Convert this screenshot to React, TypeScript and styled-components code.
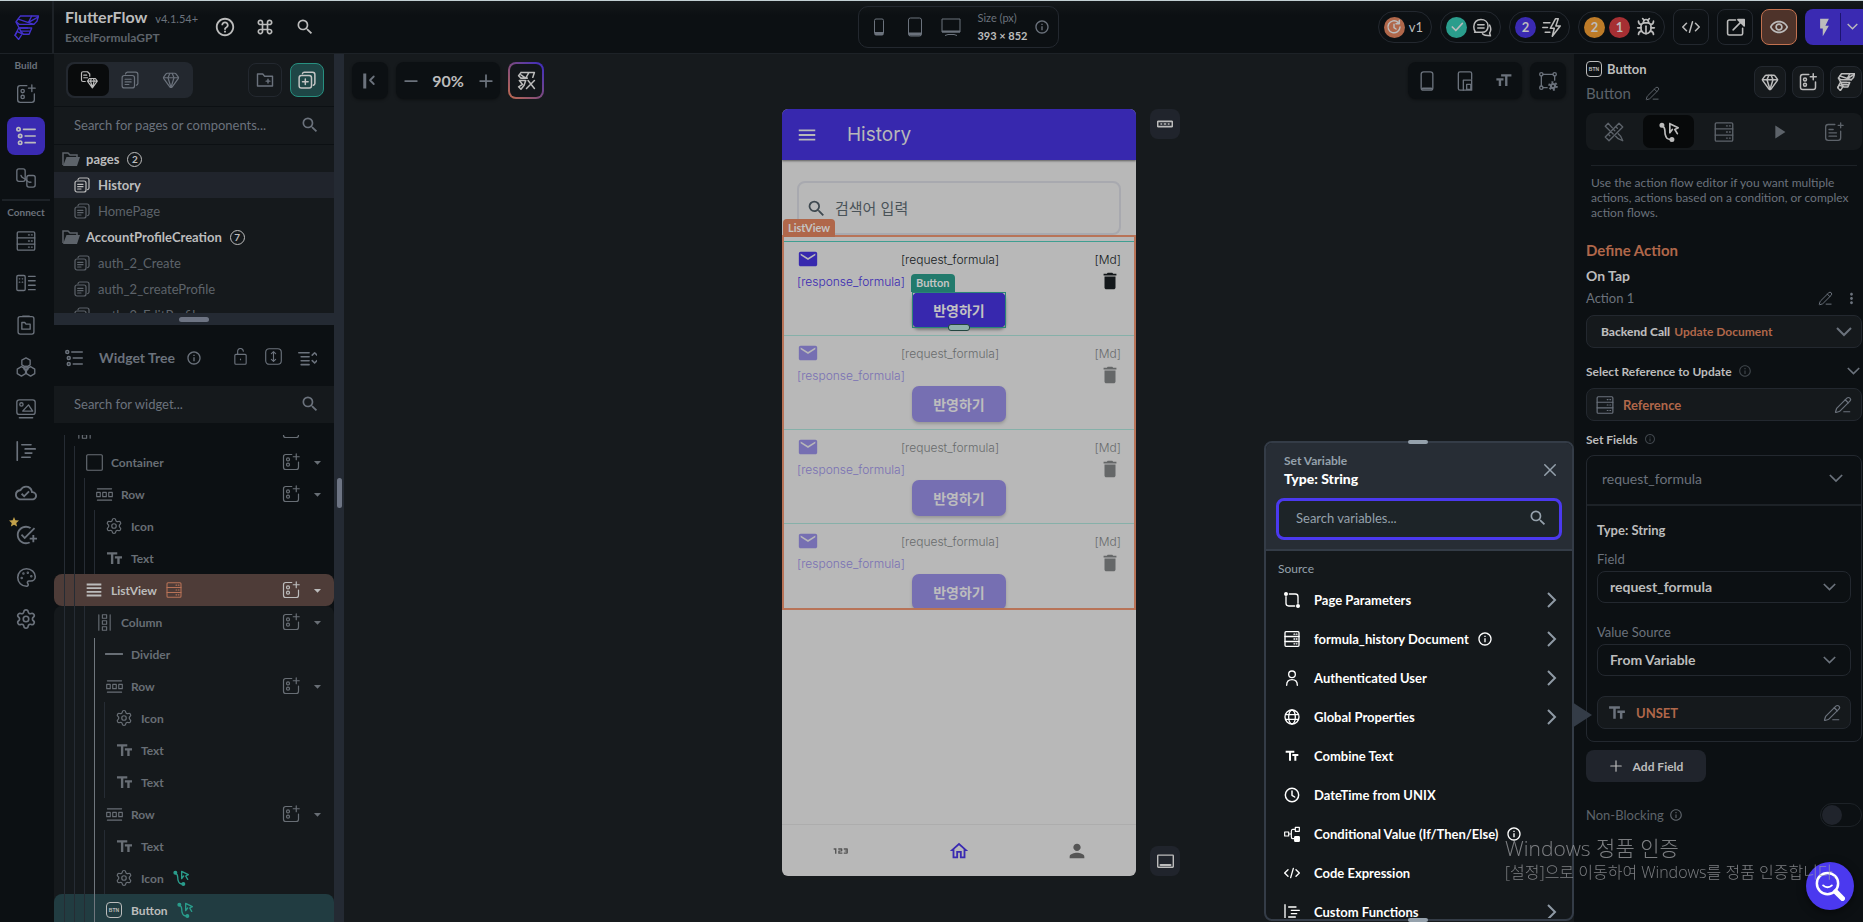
import React, { ReactNode, useState } from 'react';
import styled, { createGlobalStyle, css } from 'styled-components';
import { Bug, Gem, Palette, PencilLine, Settings } from 'lucide-react';
import {
  Md123,
  MdAddTask,
  MdArrowDropDown,
  MdDelete,
  MdEmail,
  MdFlashOn,
  MdFormatSize,
  MdHelpOutline,
  MdInfoOutline,
  MdKeyboardCommandKey,
  MdMenu,
  MdMoreVert,
  MdOutlineCloudDone,
  MdOutlineHome,
  MdOutlineRemoveRedEye,
  MdPerson,
  MdPlayArrow,
  MdSearch,
  MdStar,
  MdTextFields,
  MdViewHeadline,
} from 'react-icons/md';

const c = {
  bg: '#0c1013',
  panel: '#15191c',
  line: '#1d2227',
  box: '#23282f',
  text: '#bcbcbc',
  muted: '#6b727c',
  dim: '#5d636a',
  orange: '#b0674a',
  purple: '#3a2ab2',
  teal: '#2a9d8c',
};

const GlobalStyle = createGlobalStyle`
  * {
    box-sizing: border-box;
  }
  body {
    margin: 0;
    background: ${c.bg};
    color: ${c.text};
    font-family: Lato, 'Noto Sans CJK KR', sans-serif;
    font-size: 13px;
    overflow: hidden;
  }
  button, input, select {
    font: inherit;
    color: inherit;
  }
  button {
    padding: 0;
    border: 0;
    background: none;
    display: flex;
    align-items: center;
    justify-content: center;
    cursor: pointer;
  }
  svg {
    flex: none;
    display: block;
  }
`;

/* ---------- icons ---------- */

type IconProps = { size?: number; width?: number };

const Svg = ({ size = 20, width = 1.6, children }: IconProps & { children: ReactNode }) => (
  <svg
    width={size}
    height={size}
    viewBox="0 0 24 24"
    fill="none"
    stroke="currentColor"
    strokeWidth={width}
    strokeLinecap="round"
    strokeLinejoin="round"
  >
    {children}
  </svg>
);

const FlowLogo = (p: IconProps) => (
  <Svg {...p}>
    <path d="M6 1h17.5l-1.500 5-3 3H5L2 6.500z" />
    <path d="M4 4l15 5M17 1l-3 6 9-5" />
    <path d="M5 12.500h12l-2.500 6H9l-2.500-3z" />
    <path d="M5 12.500h8M2 7l3 5.500M4.500 12.500L1 19.500M6.500 15.500h8.500" />
    <path d="M3 16L1 19.500l3.500 4L8 18z" />
  </Svg>
);

const AddComponent = (p: IconProps) => (
  <Svg {...p}>
    <path d="M13 2H5a3 3 0 0 0-3 3v14a3 3 0 0 0 3 3h14a3 3 0 0 0 3-3v-7" />
    <circle cx="8" cy="8.5" r="2" />
    <circle cx="8" cy="15.5" r="2" />
    <path d="M19 1v8M15 5h8" />
  </Svg>
);

const TreeIcon = (p: IconProps) => (
  <Svg {...p} width={2}>
    <circle cx="3" cy="4" r="2" />
    <circle cx="5" cy="12" r="2" />
    <circle cx="5" cy="20" r="2" />
    <path d="M9 4h14M11 12h12M11 20h12" />
  </Svg>
);

const Storyboard = (p: IconProps) => (
  <Svg {...p}>
    <rect x="1" y="1" width="10" height="15" rx="2.5" />
    <rect x="13" y="9" width="10" height="14" rx="2.5" />
    <path d="M6 9c1 4 5 3 7 6s3 2 5 2" />
  </Svg>
);

const Server = (p: IconProps) => (
  <Svg {...p}>
    <rect x="1.5" y="1" width="21" height="22" rx="1.5" />
    <path d="M1.500 8.300h21M1.500 15.700h21M15 4.700h1M18.500 4.700h1M15 12h1M18.500 12h1M15 19.300h1M18.500 19.300h1" />
  </Svg>
);

const DataTypes = (p: IconProps) => (
  <Svg {...p}>
    <rect x="1" y="3" width="10" height="18" rx="1.5" />
    <path d="M4 7h.5M7.500 7h.5M4 11h.5M7.500 11h.5M15 4h8M15 9.300h8M15 14.700h8M15 20h8" />
  </Svg>
);

const AppState = (p: IconProps) => (
  <Svg {...p}>
    <rect x="2.5" y="2" width="19" height="21" rx="2.5" />
    <path d="M8 1.500h8M7 9h3.500l1.500 2h5v6H7z" />
  </Svg>
);

const Cluster = (p: IconProps) => (
  <Svg {...p}>
    <path d="M12 1l5 2.700v5.800L12 12.500 7 9.500V3.700zM6.500 11.500l5 3v5.500l-5 3-5-3v-5.500zM17.500 11.500l5 3v5.500l-5 3-5-3v-5.500z" />
    <circle cx="12" cy="13.5" r="2.5" />
  </Svg>
);

const Media = (p: IconProps) => (
  <Svg {...p}>
    <rect x="1" y="1" width="22" height="17.5" rx="3" />
    <circle cx="6.5" cy="6.5" r="2" />
    <path d="M8 14.500l7-7.500 5 7.500zM4 22.500h16" />
  </Svg>
);

const Functions = (p: IconProps) => (
  <Svg {...p} width={2}>
    <path d="M1.500 1v22M7 4.500h11M11 9.500h12M11 14.500h8M7 19.500h10" />
  </Svg>
);

const Pages = (p: IconProps) => (
  <Svg {...p}>
    <rect x="1.5" y="6" width="16.5" height="16.5" rx="3" />
    <path d="M6 4a3 3 0 0 1 2.500-2.500h11a3 3 0 0 1 3 3v12a3 3 0 0 1-2 2.500M5.500 11h8M5.500 14.500h8M5.500 18h5" />
  </Svg>
);

const PagesPlus = (p: IconProps) => (
  <Svg {...p} width={2}>
    <rect x="1.5" y="6" width="16.5" height="16.5" rx="3" />
    <path d="M6 3.500a3 3 0 0 1 2.500-2h11a3 3 0 0 1 3 3v12a3 3 0 0 1-2 2.500M9.750 10.500v7.500M6 14.250h7.500" />
  </Svg>
);

const PageGem = (p: IconProps) => (
  <Svg {...p}>
    <path d="M7 14H4a2 2 0 0 1-2-2V3a2 2 0 0 1 2-2h6l3 3v3M5 5.500h4M5 9h5" />
    <path d="M12.500 10h8l2.500 3.500-6.500 9-6.500-9zM10 13.500h13M14 13.500l2.500 8.500 2.500-8.500-1-3.500h-3z" />
  </Svg>
);

const FolderPlus = (p: IconProps) => (
  <Svg {...p} width={1.9}>
    <path d="M2 4h7l2.500 3H22v13H2zM16 11v5M13.500 13.500h5" />
  </Svg>
);

const FolderOpen = () => (
  <svg width="18" height="14" viewBox="0 0 18 14" fill="none">
    <path d="M1 13V1h5l2 2h7v3" stroke="currentColor" strokeWidth="1.5" />
    <path d="M4.500 5H18l-3 9H1z" fill="currentColor" />
  </svg>
);

const Lock = (p: IconProps) => (
  <Svg {...p}>
    <rect x="4" y="9" width="16" height="14" rx="1.5" />
    <path d="M8 9V5a4 4 0 0 1 8-.5M12 15.500v1" />
  </Svg>
);

const Expand = (p: IconProps) => (
  <Svg {...p}>
    <rect x="1" y="1" width="22" height="22" rx="5" />
    <path d="M12 5v14M9 8l3-3 3 3M9 16l3 3 3-3" />
  </Svg>
);

const Collapse = (p: IconProps) => (
  <Svg {...p} width={2}>
    <path d="M1 6h13M4 11h10M4 16h10M4 21h10M18 9l3-3 3 3M18 16l3 3 3-3" />
  </Svg>
);

const RowIcon = (p: IconProps) => (
  <Svg {...p}>
    <path d="M2 4h20M2 20h20" />
    <path d="M1 9h5v6H1zM9.500 9h5v6h-5zM18 9h5v6h-5z" />
  </Svg>
);

const ColumnIcon = (p: IconProps) => (
  <Svg {...p}>
    <path d="M4 1v22M20 1v22M9 1h6v5H9zM9 9.500h6v5H9zM9 18h6v5H9z" />
  </Svg>
);

const ContainerIcon = (p: IconProps) => (
  <Svg {...p}>
    <rect x="1" y="1" width="22" height="22" rx="1.5" />
  </Svg>
);

const DividerIcon = (p: IconProps) => (
  <Svg {...p} width={2.5}>
    <path d="M1 12h22" />
  </Svg>
);

const ActionFlow = (p: IconProps) => (
  <Svg {...p} width={2}>
    <circle cx="3.5" cy="4" r="2" fill="currentColor" />
    <circle cx="15.5" cy="21" r="2" fill="currentColor" />
    <path d="M3.500 5c5 1 3 6 4 10s2 6 7 6M13 2l10 5-4 2 3 5M13 2v11l3-4" />
  </Svg>
);

const BtnBadge = styled.span`
  width: 16px;
  height: 16px;
  flex: none;
  display: flex;
  align-items: center;
  justify-content: center;
  border: 1px solid currentColor;
  border-radius: 4px;
  font: 700 5px 'Liberation Sans', sans-serif;
`;

const Phone = () => (
  <svg width="20" height="18" viewBox="0 0 20 18" fill="none" stroke="currentColor">
    <rect x="5.5" y="1" width="9" height="16" rx="1.5" />
    <path d="M6 15.500h8" strokeWidth="3" />
  </svg>
);

const Tablet = () => (
  <svg width="20" height="20" viewBox="0 0 20 20" fill="none" stroke="currentColor">
    <rect x="3.5" y="1" width="13" height="18" rx="2" />
    <path d="M4 17h12" strokeWidth="3" />
  </svg>
);

const Monitor = () => (
  <svg width="20" height="18" viewBox="0 0 20 18" fill="none" stroke="currentColor">
    <path d="M1 1h18v13H1z" />
    <path d="M1 13.500h18" strokeWidth="2" />
    <path d="M4 17.500l3-1h6l3 1" />
  </svg>
);

const PhoneOutline = (p: IconProps) => (
  <Svg {...p}>
    <rect x="5" y="1" width="14" height="22" rx="3" />
    <path d="M7 21h10" strokeWidth="2.5" />
  </Svg>
);

const PhoneSplit = (p: IconProps) => (
  <Svg {...p}>
    <path d="M10 23H6a2 2 0 0 1-2-2V3a2 2 0 0 1 2-2h12a2 2 0 0 1 2 2v7" />
    <path d="M10 23V11h10v12zM14 16h5v6h-5z" />
  </Svg>
);

const FrameGear = (p: IconProps) => (
  <Svg {...p}>
    <circle cx="4" cy="4" r="2" />
    <circle cx="20" cy="4" r="2" />
    <circle cx="4" cy="20" r="2" />
    <path d="M6 4h12M4 6v12M20 6v5M6 20h5" />
    <circle cx="18" cy="18" r="4.5" strokeDasharray="2.300 2.400" strokeWidth="2.5" strokeLinecap="butt" />
    <circle cx="18" cy="18" r="2.5" strokeWidth="2.5" />
  </Svg>
);

const CodeIcon = (p: IconProps) => (
  <Svg {...p} width={2}>
    <path d="M6 7l-5 5 5 5M18 7l5 5-5 5M14 5l-4 14" />
  </Svg>
);

const OpenExternal = (p: IconProps) => (
  <Svg {...p} width={2}>
    <path d="M12 2.500H4a2 2 0 0 0-2 2v15a2 2 0 0 0 2 2h15a2 2 0 0 0 2-2V13M9 15L20 4" />
    <path d="M15 2h8v8z" fill="currentColor" />
  </Svg>
);

const CommentIcon = (p: IconProps) => (
  <Svg {...p} width={1.9}>
    <path d="M3 17.500c-1.500-2-2-4-2-6.500 0-6 4-9 9-9s9 3 9 8-3 8-8 8H2z" />
    <path d="M6 8.500h8M6 12.500h8M21 9c2 4 2 7 0 10l1 3.500c-4 0-8 0-10-2.500" />
  </Svg>
);

const FastBolt = (p: IconProps) => (
  <Svg {...p} width={1.9}>
    <path d="M17 1l-6.500 12h5L13 23l10-13h-5.500l3-9zM2 6h8M1 12h6M4 18h6" />
  </Svg>
);

const History = (p: IconProps) => (
  <Svg {...p} width={2.2}>
    <path d="M21 12a9 9 0 1 1-3-7M20 2v5h-5M12 8v5l3 2" />
  </Svg>
);

const CheckIcon = (p: IconProps) => (
  <Svg {...p} width={3}>
    <path d="M4 12l6 6L21 6" />
  </Svg>
);

const RulerPencil = (p: IconProps) => (
  <Svg {...p}>
    <path d="M1.500 18L18 1.500 22.500 6 6 22.500zM5 14.500l2 2M8 11.500l3 3M11 8.500l2 2M14 5.500l2 2" />
    <path d="M10 7L5 1.500 1.500 5l5.500 5.500M14 17l3 3 5.500 2.500L20 17l-3-3" />
  </Svg>
);

const DocPlus = (p: IconProps) => (
  <Svg {...p}>
    <path d="M13 3H5a3 3 0 0 0-3 3v13a3 3 0 0 0 3 3h12a3 3 0 0 0 3-3v-8M6 9h5M6 13h9M6 17h9M20 1v6M17 4h6" />
  </Svg>
);

const ParamsIcon = (p: IconProps) => (
  <Svg {...p} width={2}>
    <path d="M8 3h9a4 4 0 0 1 4 4v10M3 7v10a4 4 0 0 0 4 4h9" />
    <circle cx="3" cy="3" r="2" fill="currentColor" />
    <circle cx="21" cy="21" r="2" fill="currentColor" />
  </Svg>
);

const UserIcon = (p: IconProps) => (
  <Svg {...p} width={2}>
    <circle cx="12" cy="6.5" r="5" />
    <path d="M4 23c0-6 3-8.500 8-8.500s8 2.500 8 8.500" />
  </Svg>
);

const GlobeIcon = (p: IconProps) => (
  <Svg {...p} width={2}>
    <circle cx="12" cy="12" r="10.5" />
    <ellipse cx="12" cy="12" rx="5" ry="10.5" />
    <path d="M2.500 8.500h19M2.500 15.500h19" />
  </Svg>
);

const ClockIcon = (p: IconProps) => (
  <Svg {...p} width={2.2}>
    <circle cx="12" cy="12" r="10" />
    <path d="M12 6v6.500l4 2.500" />
  </Svg>
);

const BranchIcon = (p: IconProps) => (
  <Svg {...p} width={1.8}>
    <path d="M1 9h6v6H1zM17 2h6v6h-6zM7 12h4M17 5h-4c-2 0-2 1-2 3v8c0 2 0 3 2 3h4" />
    <rect x="16" y="16" width="7" height="7" rx="1" fill="currentColor" />
  </Svg>
);

const ChevronDown = ({ size = 14 }: IconProps) => (
  <svg width={size} height={size / 2 + 2} viewBox="0 0 16 10" fill="none" stroke="currentColor" strokeWidth="2">
    <path d="M1 1l7 7 7-7" />
  </svg>
);

const ChevronRight = () => (
  <svg width="10" height="16" viewBox="0 0 10 16" fill="none" stroke="#8f9aa5" strokeWidth="2">
    <path d="M1 1l7 7-7 7" />
  </svg>
);

/* ---------- top bar ---------- */

const Shell = styled.div`
  height: 100vh;
  display: flex;
  flex-direction: column;
  border-top: 1px solid #c3d0d4;
`;

const TopBar = styled.header`
  height: 53px;
  flex: none;
  display: flex;
  border-bottom: 1px solid ${c.line};
  background: linear-gradient(#15191b, ${c.bg} 14px);
`;

const LogoCell = styled.div`
  width: 54px;
  flex: none;
  display: flex;
  align-items: center;
  justify-content: center;
  color: #4331cc;
  border-right: 2px solid ${c.line};
`;

const TopGrid = styled.div`
  flex: 1;
  display: grid;
  grid-template-columns: 1fr auto 1fr;
  align-items: center;
`;

const ProjectArea = styled.div`
  display: flex;
  align-items: center;
  padding-left: 11px;
`;

const ProjectInfo = styled.div`
  width: 140px;
  white-space: nowrap;
`;

const Brand = styled.div`
  display: flex;
  align-items: baseline;
  gap: 8px;
  font-size: 16px;
  line-height: 20px;
  font-weight: 700;
`;

const Version = styled.span`
  font-size: 11px;
  font-weight: 400;
  color: ${c.muted};
`;

const ProjectName = styled.div`
  font-size: 12px;
  line-height: 18px;
  font-weight: 700;
  color: ${c.dim};
`;

const TopLink = styled.button`
  width: 40px;
  height: 36px;
`;

const DeviceBox = styled.div`
  height: 42px;
  display: flex;
  align-items: center;
  padding: 0 8px 0 10px;
  gap: 16px;
  border: 1px solid ${c.box};
  border-radius: 10px;
  color: ${c.muted};
`;

const DeviceSize = styled.div`
  font-size: 11px;
  line-height: 18px;
  margin-right: -10px;
  strong {
    display: block;
    color: ${c.text};
  }
`;

const TopActions = styled.div`
  display: flex;
  align-items: center;
  justify-content: flex-end;
  gap: 8px;
`;

const StatusPill = styled.button`
  height: 32px;
  padding: 0 8px 0 5px;
  gap: 4px;
  border: 1px solid ${c.box};
  border-radius: 16px;
  font-size: 13px;
`;

const Dot = styled.span<{ $color: string }>`
  width: 21px;
  height: 21px;
  border-radius: 50%;
  background: ${p => p.$color};
  display: flex;
  align-items: center;
  justify-content: center;
  font-weight: 700;
  font-size: 13px;
  & + svg {
    margin-left: 2px;
  }
`;

const SquareButton = styled.button<{ $active?: boolean }>`
  width: 36px;
  height: 36px;
  border: 1px solid ${p => (p.$active ? '#c2714f' : c.box)};
  background: ${p => (p.$active ? '#4e332a' : 'transparent')};
  border-radius: 8px;
`;

const DeployGroup = styled.div`
  display: flex;
  height: 36px;
  background: ${c.purple};
  border-radius: 8px 0 0 8px;
`;

const DeployButton = styled.button<{ $narrow?: boolean }>`
  width: ${p => (p.$narrow ? '23px' : '35px')};
  margin: 4px 0;
  padding-left: ${p => (p.$narrow ? '0' : '4px')};
  border-left: ${p => (p.$narrow ? '1px solid #1c1470' : '0')};
`;

/* ---------- rail ---------- */

const Main = styled.div`
  flex: 1;
  min-height: 0;
  display: flex;
`;

const Rail = styled.nav`
  width: 54px;
  flex: none;
  display: flex;
  flex-direction: column;
  align-items: center;
  padding-right: 2px;
  color: ${c.muted};
`;

const RailLabel = styled.div`
  height: 19px;
  padding-top: 3px;
  font-size: 10px;
  line-height: 16px;
  font-weight: 700;
`;

const RailSlot = styled.div`
  height: 42px;
  display: flex;
  align-items: center;
`;

const RailButton = styled.button<{ $active?: boolean }>`
  width: 38px;
  height: 38px;
  border-radius: 8px;
  position: relative;
  ${p => p.$active && css`
    background: ${c.purple};
    color: ${c.text};
  `}
`;

const RailStar = styled.span`
  position: absolute;
  left: 1px;
  top: 0;
  color: #c2a14a;
`;

const RailRule = styled.div`
  width: 48px;
  height: 2px;
  background: ${c.line};
`;

/* ---------- left panel ---------- */

const LeftPanel = styled.aside`
  width: 290px;
  flex: none;
  display: flex;
  flex-direction: column;
  border-right: 10px solid #242a33;
  position: relative;
`;

const ResizeGrip = styled.span`
  position: absolute;
  right: -8px;
  top: 424px;
  width: 5px;
  height: 30px;
  border-radius: 3px;
  background: #6d7483;
`;

const PageTools = styled.div`
  height: 53px;
  display: flex;
  align-items: center;
  gap: 8px;
  padding: 0 10px 0 12px;
  background: ${c.panel};
  border-bottom: 1px solid ${c.bg};
`;

const Segments = styled.div`
  display: flex;
  padding: 2px;
  height: 36px;
  margin-right: auto;
  background: #23282f;
  border-radius: 8px;
  color: ${c.muted};
`;

const Segment = styled.button<{ $active?: boolean }>`
  width: 41px;
  border-radius: 7px;
  ${p => p.$active && css`
    background: #090b0c;
    color: ${c.text};
  `}
`;

const ToolSquare = styled.button<{ $accent?: boolean }>`
  width: 34px;
  height: 34px;
  border-radius: 8px;
  border: 1px solid ${p => (p.$accent ? '#279080' : c.box)};
  background: ${p => (p.$accent ? '#1e4646' : 'transparent')};
  color: ${p => (p.$accent ? '#c4c4c4' : c.muted)};
`;

const SearchRow = styled.label`
  height: 37px;
  flex: none;
  display: flex;
  align-items: center;
  padding: 0 14px 2px 20px;
  background: ${c.panel};
  color: ${c.muted};
`;

const SearchInput = styled.input`
  flex: 1;
  min-width: 0;
  padding: 0;
  border: 0;
  outline: 0;
  background: none;
  font-size: 13px;
  &::placeholder {
    color: ${c.muted};
    opacity: 1;
  }
`;

const PageList = styled.div`
  height: 169px;
  overflow: hidden;
  padding-top: 1px;
  background: ${c.panel};
  border-top: 1px solid ${c.bg};
`;

const PageRow = styled.div<{ $kind: 'folder' | 'page'; $active?: boolean }>`
  height: 26px;
  display: flex;
  align-items: center;
  gap: ${p => (p.$kind === 'folder' ? '6px' : '8px')};
  padding-left: ${p => (p.$kind === 'folder' ? '8px' : '20px')};
  color: ${p => (p.$active ? c.text : c.dim)};
  background: ${p => (p.$active ? '#20242c' : 'transparent')};
  font-weight: ${p => (p.$active ? 700 : 400)};
`;

const FolderName = styled.span`
  color: ${c.text};
  font-weight: 700;
`;

const Count = styled.span`
  width: 15px;
  height: 15px;
  margin-left: 2px;
  border: 1px solid ${c.text};
  border-radius: 50%;
  color: ${c.text};
  font-size: 10px;
  line-height: 13px;
  font-weight: 700;
  text-align: center;
`;

const SplitBar = styled.div`
  height: 12px;
  flex: none;
  display: flex;
  align-items: center;
  justify-content: center;
  background: #242a33;
  &::after {
    content: '';
    width: 30px;
    height: 5px;
    border-radius: 3px;
    background: #6d7483;
  }
`;

const TreeHeader = styled.div`
  height: 61px;
  flex: none;
  display: flex;
  align-items: center;
  padding: 4px 17px 0 11px;
  color: ${c.muted};
`;

const TreeTitle = styled.h2`
  margin: 0 11px 0 16px;
  font-size: 14px;
  font-weight: 700;
`;

const TreeTools = styled.div`
  margin-left: auto;
  display: flex;
  gap: 16px;
`;

const TreeView = styled.div`
  flex: 1;
  min-height: 0;
  overflow: hidden;
  margin-top: 12px;
`;

const TreeRows = styled.div`
  margin-top: -21px;
`;

const TreeRow = styled.div<{ $tone?: 'orange' | 'teal' }>`
  height: 32px;
  display: flex;
  align-items: center;
  padding: 0 8px 0 10px;
  color: ${p => (p.$tone ? c.text : '#686e75')};
  font-size: 12px;
  font-weight: 700;
  ${p => p.$tone === 'orange' && css`
    background: #4e3c38;
    border-radius: 8px;
  `}
  ${p => p.$tone === 'teal' && css`
    background: #213c41;
    border-radius: 8px 8px 0 0;
  `}
`;

const SubTree = styled.div`
  background: ${c.panel};
  border-radius: 8px 8px 0 0;
`;

const Guide = styled.span<{ $bright?: boolean }>`
  width: 10px;
  height: 32px;
  flex: none;
  border-left: 1px solid ${p => (p.$bright ? '#6f767d' : '#262c34')};
`;

const TreeIconBox = styled.span`
  width: 18px;
  margin: 0 8px 0 1px;
  display: flex;
  justify-content: center;
`;

const TreeMark = styled.span<{ $color: string }>`
  margin-left: 9px;
  color: ${p => p.$color};
`;

const TreeEnd = styled.span`
  margin-left: auto;
  display: flex;
  align-items: center;
  gap: 9px;
`;

/* ---------- canvas ---------- */

const Canvas = styled.main`
  flex: 1;
  min-width: 0;
  display: flex;
  flex-direction: column;
  gap: 10px;
  padding: 8px 8px 46px;
  background: #161a1d;
  position: relative;
`;

const CanvasTools = styled.div`
  display: flex;
  gap: 8px;
`;

const CanvasTool = styled.div<{ $push?: boolean }>`
  height: 37px;
  display: flex;
  align-items: center;
  border-radius: 8px;
  background: ${c.bg};
  color: ${c.muted};
  box-shadow: 0 1px 3px rgba(0, 0, 0, 0.4);
  margin-left: ${p => (p.$push ? 'auto' : '0')};
`;

const CanvasButton = styled.button<{ $wide?: boolean }>`
  width: ${p => (p.$wide ? '38px' : '36px')};
  height: 37px;
`;

const ZoomButton = styled.button`
  width: 29px;
  height: 37px;
`;

const ZoomValue = styled.span`
  width: 46px;
  text-align: center;
  font-size: 16px;
  font-weight: 700;
  color: ${c.text};
`;

const AiButton = styled.button`
  width: 36px;
  height: 37px;
  border: 2px solid transparent;
  border-radius: 8px;
  background:
    linear-gradient(#12161a, #12161a) padding-box,
    linear-gradient(to top right, #c06a4c, #7c4a80 50%, #3a2ac4) border-box;
`;

const Stage = styled.div`
  flex: 1;
  min-height: 0;
  display: grid;
  grid-template-columns: 1fr 354px 1fr;
`;

const SideButtons = styled.div`
  grid-column: 3;
  padding-left: 14px;
  display: flex;
  flex-direction: column;
  justify-content: space-between;
`;

const SideButton = styled.button`
  width: 30px;
  height: 30px;
  border-radius: 8px;
  background: #20242c;
`;

const Device = styled.div`
  grid-column: 2;
  display: flex;
  flex-direction: column;
  overflow: hidden;
  border-radius: 6px;
  background: #b8b8b8;
  color: #14181b;
  font-family: Inter, 'Noto Sans CJK KR', sans-serif;
`;

const AppBar = styled.div`
  height: 51px;
  flex: none;
  display: flex;
  align-items: center;
  gap: 29px;
  padding-left: 14px;
  background: #3728ae;
  color: #b8b8b8;
  font-size: 19px;
  box-shadow: 0 1px 2px rgba(0, 0, 0, 0.5);
`;

const AppSearch = styled.label`
  height: 54px;
  margin: 21px 15px 0;
  flex: none;
  display: flex;
  align-items: center;
  gap: 8px;
  padding: 0 7px;
  border: 2px solid #a8a9af;
  border-radius: 8px;
  color: #3f4950;
`;

const AppSearchInput = styled.input`
  flex: 1;
  min-width: 0;
  border: 0;
  outline: 0;
  padding: 0;
  background: none;
  font-size: 15px;
  &::placeholder {
    color: #4a5358;
    opacity: 1;
  }
`;

const ListFrame = styled.div`
  height: 375px;
  flex: none;
  position: relative;
  border: 2px solid #b87357;
  padding-top: 4px;
`;

const ListClip = styled.div`
  height: 367px;
  overflow: hidden;
`;

const Tag = styled.span<{ $color: string }>`
  position: absolute;
  left: -1px;
  bottom: 100%;
  height: 18px;
  padding: 0 5px;
  border-radius: 4px 4px 0 0;
  background: ${p => p.$color};
  color: #c4c4c4;
  font: 700 11px/18px Lato, sans-serif;
`;

const ListItem = styled.div<{ $faded?: boolean }>`
  height: 94px;
  padding: 6px 13px 0;
  border-top: 1px solid ${p => (p.$faded ? '#86b0a9' : '#3f9e91')};
  & > * {
    opacity: ${p => (p.$faded ? 0.5 : 1)};
  }
`;

const ItemLine = styled.div`
  height: 22px;
  display: flex;
  align-items: center;
  justify-content: space-between;
  font-size: 12px;
  font-weight: 300;
`;

const ItemDate = styled.span`
  width: 40px;
  text-align: right;
`;

const ItemResponse = styled.span`
  color: #3a2ab2;
`;

const MailGlyph = styled(MdEmail)`
  color: #3728ae;
`;

const ApplyWrap = styled.div<{ $selected?: boolean }>`
  width: 94px;
  height: 36px;
  margin: 0 auto;
  position: relative;
  outline: ${p => (p.$selected ? '1px solid #2a8577' : '0')};
  outline-offset: -1px;
`;

const ApplyButton = styled.button`
  width: 94px;
  height: 36px;
  border-radius: 7px;
  background: #3728ae;
  color: #c2c2c2;
  font-size: 14px;
  font-weight: 700;
  box-shadow: 0 2px 3px rgba(0, 0, 0, 0.35);
`;

const SizeHandle = styled.span`
  position: absolute;
  left: 36px;
  bottom: -3px;
  width: 22px;
  height: 7px;
  border: 1px solid #23443f;
  border-radius: 3px;
  background: #8fb1ad;
`;

const NavBar = styled.div`
  height: 52px;
  margin-top: auto;
  display: grid;
  grid-template-columns: repeat(3, 1fr);
  border-top: 1px solid #adadad;
`;

const NavButton = styled.button<{ $active?: boolean }>`
  color: ${p => (p.$active ? '#3a2ab2' : '#555')};
`;

/* ---------- variable popup ---------- */

const Popup = styled.section`
  position: absolute;
  right: 0;
  bottom: 1px;
  width: 310px;
  height: 480px;
  border: 2px solid #343c47;
  border-radius: 8px;
  background: #14181b;
  color: #fff;
`;

const PopupGrip = styled.span<{ $edge: 'top' | 'bottom' }>`
  position: absolute;
  left: 50%;
  margin-left: -11px;
  ${p => p.$edge}: -3px;
  width: 20px;
  height: 4px;
  border-radius: 2px;
  background: #95a1ac;
`;

const PopupArrow = styled.span`
  position: absolute;
  left: 100%;
  top: 259px;
  border-left: 20px solid #343c47;
  border-top: 13px solid transparent;
  border-bottom: 13px solid transparent;
`;

const PopupHead = styled.div`
  height: 108px;
  padding: 9px 10px 0;
  background: #272d35;
  border-bottom: 2px solid #343c47;
  border-radius: 6px 6px 0 0;
`;

const PopupTitle = styled.div`
  display: flex;
  align-items: center;
  justify-content: space-between;
  padding: 0 5px 0 8px;
  font-size: 12px;
  line-height: 18px;
  font-weight: 700;
  color: #95a1ac;
  strong {
    display: block;
    font-size: 14px;
    color: #fff;
  }
`;

const PopupSearch = styled.label`
  height: 42px;
  margin-top: 10px;
  display: flex;
  align-items: center;
  padding: 0 11px 2px 17px;
  border: 3px solid #4b39ef;
  border-radius: 8px;
  background: #1d2428;
  color: #95a1ac;
`;

const PopupInput = styled(SearchInput)`
  &::placeholder {
    color: #95a1ac;
  }
`;

const PopupBody = styled.div`
  height: 367px;
  overflow: hidden;
`;

const SourceLabel = styled.div`
  height: 29px;
  padding: 9px 12px 0;
  font-size: 12px;
  line-height: 18px;
  color: #95a1ac;
`;

const VariableButton = styled.button`
  width: 100%;
  height: 39px;
  justify-content: flex-start;
  padding: 0 15px 0 18px;
  gap: 14px;
  font-size: 13px;
  font-weight: 700;
  text-align: left;
`;

const VariableName = styled.span`
  flex: 1;
  display: flex;
  align-items: center;
  gap: 8px;
`;

/* ---------- properties panel ---------- */

const Props = styled.aside`
  width: 289px;
  flex: none;
  padding: 6px 1px 0 12px;
  background: ${c.bg};
`;

const PropsHead = styled.div`
  display: flex;
  align-items: flex-start;
  gap: 6px;
`;

const WidgetIdent = styled.div`
  margin-right: auto;
  line-height: 24px;
`;

const WidgetType = styled.div`
  display: flex;
  align-items: center;
  gap: 5px;
  height: 18px;
  font-size: 13px;
  font-weight: 700;
`;

const WidgetName = styled.div`
  display: flex;
  align-items: center;
  gap: 14px;
  height: 30px;
  color: ${c.dim};
  font-size: 15px;
`;

const PropsTool = styled.button`
  width: 32px;
  height: 32px;
  margin-top: 6px;
  border: 1px solid ${c.box};
  border-radius: 8px;
  background: #15191c;
`;

const Tabs = styled.div`
  display: grid;
  grid-template-columns: repeat(5, 1fr);
  height: 37px;
  margin-top: 5px;
  border-radius: 8px;
  background: ${c.panel};
`;

const Tab = styled.button<{ $active?: boolean }>`
  margin: 2px;
  border-radius: 7px;
  background: ${p => (p.$active ? '#07090a' : 'transparent')};
  color: ${p => (p.$active ? c.text : c.dim)};
`;

const Hint = styled.p`
  margin: 15px 5px 18px;
  padding-top: 9px;
  border-top: 1px solid ${c.line};
  font-size: 12px;
  line-height: 15px;
  color: ${c.muted};
`;

const SectionTitle = styled.h3<{ $accent?: boolean }>`
  margin: 0;
  height: 25px;
  font-size: ${p => (p.$accent ? '15px' : '14px')};
  line-height: 25px;
  font-weight: 700;
  color: ${p => (p.$accent ? c.orange : c.text)};
`;

const ActionLine = styled.div`
  height: 27px;
  padding-bottom: 7px;
  display: flex;
  align-items: center;
  color: ${c.muted};
`;

const LabelLine = styled.div<{ $tall?: boolean }>`
  height: ${p => (p.$tall ? '40px' : '34px')};
  padding-top: ${p => (p.$tall ? '6px' : '2px')};
  display: flex;
  align-items: center;
  gap: 6px;
  font-size: 12px;
  font-weight: 700;
`;

const LineEnd = styled.span`
  margin-left: auto;
  margin-right: 2px;
  display: flex;
  align-items: center;
  gap: 10px;
  color: ${c.muted};
`;

const Faint = styled.span`
  color: #3f454b;
`;

const FieldButton = styled.button<{ $wide?: boolean }>`
  width: 100%;
  height: 33px;
  justify-content: flex-start;
  padding: 0 9px;
  gap: 9px;
  border: 1px solid ${c.box};
  border-radius: 8px;
  background: #15191c;
  color: ${c.muted};
  font-size: 13px;
  font-weight: 700;
  ${p => p.$wide && css`
    padding-left: 14px;
    gap: 4px;
    font-size: 12px;
    & > strong {
      color: ${c.text};
    }
  `}
  & > svg:last-child {
    margin-left: auto;
  }
`;

const Accent = styled.span`
  color: ${c.orange};
`;

const FieldsCard = styled.div`
  border: 1px solid ${c.box};
  border-radius: 8px;
`;

const FieldsHead = styled.button`
  width: 100%;
  height: 50px;
  justify-content: space-between;
  padding: 0 18px 3px 15px;
  border-bottom: 2px solid ${c.line};
  color: ${c.muted};
  font-size: 14px;
`;

const FieldsBody = styled.div`
  padding: 14px 10px 12px;
`;

const TypeLine = styled.div`
  height: 20px;
  line-height: 20px;
  margin-bottom: 10px;
  font-weight: 700;
  font-size: 13px;
`;

const SelectField = styled.label`
  display: block;
  position: relative;
  margin-bottom: 20px;
  color: ${c.muted};
  font-size: 13px;
  line-height: 18px;
  & > svg {
    position: absolute;
    right: 15px;
    bottom: 12px;
  }
`;

const Select = styled.select`
  appearance: none;
  display: block;
  width: 100%;
  height: 32px;
  padding: 0 12px;
  margin-top: 3px;
  border: 1px solid ${c.box};
  border-radius: 8px;
  background: ${c.bg};
  color: ${c.text};
  font-size: 14px;
  font-weight: 700;
`;

const AddField = styled.button`
  width: 120px;
  height: 32px;
  margin-top: 8px;
  gap: 10px;
  border-radius: 8px;
  background: #20242c;
  font-size: 12px;
  font-weight: 700;
`;

const ToggleRow = styled.label`
  height: 24px;
  margin-top: 21px;
  display: flex;
  align-items: center;
  gap: 5px;
  color: ${c.dim};
  font-size: 13px;
`;

const Toggle = styled.input`
  appearance: none;
  width: 42px;
  height: 24px;
  margin: 0 0 0 auto;
  padding: 1px;
  border: 1px solid ${c.line};
  border-radius: 12px;
  &::before {
    content: '';
    display: block;
    width: 20px;
    height: 20px;
    border-radius: 50%;
    background: #20242c;
  }
`;

/* ---------- overlays ---------- */

const HelpFab = styled.button`
  position: fixed;
  right: 9px;
  bottom: 12px;
  width: 48px;
  height: 48px;
  border-radius: 50%;
  background: #4b39ef;
  color: #fff;
  box-shadow: 0 2px 8px rgba(0, 0, 0, 0.5);
`;

const Watermark = styled.div`
  position: fixed;
  right: 22px;
  bottom: 39px;
  width: 336px;
  color: rgba(160, 162, 165, 0.75);
  font: 300 16px/22px 'Open Sans', 'Noto Sans CJK KR', sans-serif;
  white-space: nowrap;
  pointer-events: none;
  strong {
    display: block;
    font-size: 21px;
    line-height: 26px;
    font-weight: 300;
  }
`;

/* ---------- data ---------- */

const buildItems = [
  { label: 'Widget palette', icon: <AddComponent /> },
  { label: 'Widget tree', icon: <TreeIcon />, active: true },
  { label: 'Storyboard', icon: <Storyboard /> },
];

const connectItems = [
  { label: 'Firestore', icon: <Server /> },
  { label: 'Data types', icon: <DataTypes /> },
  { label: 'App state', icon: <AppState /> },
  { label: 'API calls', icon: <Cluster /> },
  { label: 'Media assets', icon: <Media /> },
  { label: 'Custom functions', icon: <Functions /> },
  { label: 'Cloud functions', icon: <MdOutlineCloudDone size={22} /> },
  { label: 'Automated tests', icon: <MdAddTask size={22} />, star: true },
  { label: 'Theme', icon: <Palette size={21} strokeWidth={1.8} /> },
  { label: 'Settings', icon: <Settings size={22} strokeWidth={1.8} /> },
];

const pageRows = [
  { name: 'pages', count: 2 },
  { name: 'History', active: true },
  { name: 'HomePage' },
  { name: 'AccountProfileCreation', count: 7 },
  { name: 'auth_2_Create' },
  { name: 'auth_2_createProfile' },
  { name: 'auth_2_EditProfile' },
];

type Node = {
  name: string;
  icon: ReactNode;
  depth: number;
  open?: boolean;
  inColumn?: boolean;
  tone?: 'orange' | 'teal';
  mark?: 'query' | 'action';
};

const rowIcon = <RowIcon size={17} />;
const gear = <Settings size={18} strokeWidth={1.6} />;
const text = <MdTextFields size={19} />;

const upperNodes: Node[] = [
  { name: '', icon: <ColumnIcon size={17} />, depth: 1, open: true },
  { name: 'Container', icon: <ContainerIcon size={17} />, depth: 2, open: true },
  { name: 'Row', icon: rowIcon, depth: 3, open: true },
  { name: 'Icon', icon: gear, depth: 4 },
  { name: 'Text', icon: text, depth: 4 },
  { name: 'ListView', icon: <MdViewHeadline size={22} />, depth: 2, open: true, tone: 'orange', mark: 'query' },
];

const lowerNodes: Node[] = [
  { name: 'Column', icon: <ColumnIcon size={17} />, depth: 3, open: true },
  { name: 'Divider', icon: <DividerIcon size={18} />, depth: 4, inColumn: true },
  { name: 'Row', icon: rowIcon, depth: 4, open: true, inColumn: true },
  { name: 'Icon', icon: gear, depth: 5, inColumn: true },
  { name: 'Text', icon: text, depth: 5, inColumn: true },
  { name: 'Text', icon: text, depth: 5, inColumn: true },
  { name: 'Row', icon: rowIcon, depth: 4, open: true, inColumn: true },
  { name: 'Text', icon: text, depth: 5, inColumn: true },
  { name: 'Icon', icon: gear, depth: 5, mark: 'action', inColumn: true },
  { name: 'Button', icon: <BtnBadge>BTN</BtnBadge>, depth: 4, tone: 'teal', mark: 'action', inColumn: true },
];

const variables = [
  { name: 'Page Parameters', icon: <ParamsIcon size={16} />, nested: true },
  { name: 'formula_history Document', icon: <Server size={16} width={2} />, nested: true, info: true },
  { name: 'Authenticated User', icon: <UserIcon size={16} />, nested: true },
  { name: 'Global Properties', icon: <GlobeIcon size={16} />, nested: true },
  { name: 'Combine Text', icon: <MdTextFields size={16} /> },
  { name: 'DateTime from UNIX', icon: <ClockIcon size={16} /> },
  { name: 'Conditional Value (If/Then/Else)', icon: <BranchIcon size={16} />, info: true },
  { name: 'Code Expression', icon: <CodeIcon size={16} /> },
  { name: 'Custom Functions', icon: <Functions size={16} />, nested: true },
];

/* ---------- parts ---------- */

const renderNode = (node: Node, index: number) => (
  <TreeRow key={index} $tone={node.tone}>
    {Array.from({ length: node.depth }, (_, i) => (
      <Guide key={i} $bright={node.inColumn && i === 3} />
    ))}
    <TreeIconBox>{node.icon}</TreeIconBox>
    {node.name}
    {node.mark === 'query' && <TreeMark $color="#b87357"><Server size={16} /></TreeMark>}
    {node.mark === 'action' && <TreeMark $color={c.teal}><ActionFlow size={16} /></TreeMark>}
    {node.open && (
      <TreeEnd>
        <AddComponent size={18} />
        <MdArrowDropDown size={17} />
      </TreeEnd>
    )}
  </TreeRow>
);

function Header() {
  return (
    <TopBar>
      <LogoCell><FlowLogo size={25} width={1.3} /></LogoCell>
      <TopGrid>
        <ProjectArea>
          <ProjectInfo>
            <Brand>FlutterFlow <Version>v4.1.54+</Version></Brand>
            <ProjectName>ExcelFormulaGPT</ProjectName>
          </ProjectInfo>
          <TopLink aria-label="Help"><MdHelpOutline size={22} /></TopLink>
          <TopLink aria-label="Shortcuts"><MdKeyboardCommandKey size={20} /></TopLink>
          <TopLink aria-label="Search"><MdSearch size={20} /></TopLink>
        </ProjectArea>
        <DeviceBox>
          <Phone />
          <Tablet />
          <Monitor />
          <DeviceSize>Size (px)<strong>393 × 852</strong></DeviceSize>
          <MdInfoOutline size={16} />
        </DeviceBox>
        <TopActions>
          <StatusPill><Dot $color={c.orange}><History size={16} /></Dot>v1</StatusPill>
          <StatusPill aria-label="Comments">
            <Dot $color={c.teal}><CheckIcon size={14} /></Dot>
            <CommentIcon size={19} />
          </StatusPill>
          <StatusPill><Dot $color={c.purple}>2</Dot><FastBolt size={19} /></StatusPill>
          <StatusPill>
            <Dot $color="#bd7b28">2</Dot>
            <Dot $color="#a62f33">1</Dot>
            <Bug size={20} />
          </StatusPill>
          <SquareButton aria-label="View code"><CodeIcon size={18} /></SquareButton>
          <SquareButton aria-label="Open"><OpenExternal size={19} /></SquareButton>
          <SquareButton aria-label="Preview" $active><MdOutlineRemoveRedEye size={20} /></SquareButton>
          <DeployGroup>
            <DeployButton aria-label="Run"><MdFlashOn size={21} /></DeployButton>
            <DeployButton aria-label="Run options" $narrow><ChevronDown size={11} /></DeployButton>
          </DeployGroup>
        </TopActions>
      </TopGrid>
    </TopBar>
  );
}

function PhonePreview() {
  return (
    <Device>
      <AppBar><MdMenu size={22} />History</AppBar>
      <AppSearch>
        <MdSearch size={21} />
        <AppSearchInput placeholder="검색어 입력" />
      </AppSearch>
      <ListFrame>
        <Tag $color="#b0674a">ListView</Tag>
        <ListClip>
          {[0, 1, 2, 3].map(i => (
            <ListItem key={i} $faded={i > 0}>
              <ItemLine>
                <MailGlyph size={22} />
                <span>[request_formula]</span>
                <ItemDate>[Md]</ItemDate>
              </ItemLine>
              <ItemLine>
                <ItemResponse>[response_formula]</ItemResponse>
                <MdDelete size={22} />
              </ItemLine>
              <ApplyWrap $selected={i === 0}>
                {i === 0 && <Tag $color="#227a6c">Button</Tag>}
                <ApplyButton>반영하기</ApplyButton>
                {i === 0 && <SizeHandle />}
              </ApplyWrap>
            </ListItem>
          ))}
        </ListClip>
      </ListFrame>
      <NavBar>
        <NavButton aria-label="List"><Md123 size={22} /></NavButton>
        <NavButton aria-label="Home" $active><MdOutlineHome size={22} /></NavButton>
        <NavButton aria-label="Profile"><MdPerson size={22} /></NavButton>
      </NavBar>
    </Device>
  );
}

function VariablePopup() {
  const [query, setQuery] = useState('');

  return (
    <Popup>
      <PopupGrip $edge="top" />
      <PopupHead>
        <PopupTitle>
          <div>Set Variable<strong>Type: String</strong></div>
          <button aria-label="Close"><Svg size={14} width={2.5}><path d="M3 3l18 18M21 3L3 21" /></Svg></button>
        </PopupTitle>
        <PopupSearch>
          <PopupInput value={query} onChange={e => setQuery(e.target.value)} placeholder="Search variables..." />
          <MdSearch size={20} />
        </PopupSearch>
      </PopupHead>
      <PopupBody>
        <SourceLabel>Source</SourceLabel>
        {variables.map(v => (
          <VariableButton key={v.name}>
            {v.icon}
            <VariableName>{v.name}{v.info && <MdInfoOutline size={16} />}</VariableName>
            {v.nested && <ChevronRight />}
          </VariableButton>
        ))}
      </PopupBody>
      <PopupGrip $edge="bottom" />
      <PopupArrow />
    </Popup>
  );
}

function Properties() {
  return (
    <Props>
      <PropsHead>
        <WidgetIdent>
          <WidgetType><BtnBadge>BTN</BtnBadge>Button</WidgetType>
          <WidgetName>Button <PencilLine size={15} strokeWidth={1.6} /></WidgetName>
        </WidgetIdent>
        <PropsTool aria-label="Create component"><Gem size={18} /></PropsTool>
        <PropsTool aria-label="Wrap widget"><AddComponent size={18} width={2} /></PropsTool>
        <PropsTool aria-label="AI"><FlowLogo size={18} width={2} /></PropsTool>
      </PropsHead>
      <Tabs>
        <Tab aria-label="Properties"><RulerPencil /></Tab>
        <Tab aria-label="Actions" $active><ActionFlow /></Tab>
        <Tab aria-label="Backend query"><Server /></Tab>
        <Tab aria-label="Animations"><MdPlayArrow size={22} /></Tab>
        <Tab aria-label="Documentation"><DocPlus /></Tab>
      </Tabs>
      <Hint>
        Use the action flow editor if you want multiple actions, actions based on a condition, or complex action flows.
      </Hint>
      <SectionTitle $accent>Define Action</SectionTitle>
      <SectionTitle>On Tap</SectionTitle>
      <ActionLine>
        Action 1
        <LineEnd><PencilLine size={15} strokeWidth={1.6} /><MdMoreVert size={17} /></LineEnd>
      </ActionLine>
      <FieldButton $wide>
        <strong>Backend Call</strong> <Accent>Update Document</Accent>
        <ChevronDown size={16} />
      </FieldButton>
      <LabelLine $tall>
        Select Reference to Update
        <Faint><MdInfoOutline size={14} /></Faint>
        <LineEnd><ChevronDown size={13} /></LineEnd>
      </LabelLine>
      <FieldButton>
        <Server size={18} />
        <Accent>Reference</Accent>
        <PencilLine size={18} strokeWidth={1.6} />
      </FieldButton>
      <LabelLine>
        Set Fields
        <Faint><MdInfoOutline size={12} /></Faint>
      </LabelLine>
      <FieldsCard>
        <FieldsHead>request_formula<ChevronDown size={14} /></FieldsHead>
        <FieldsBody>
          <TypeLine>Type: String</TypeLine>
          <SelectField>
            Field
            <Select><option>request_formula</option></Select>
            <ChevronDown size={13} />
          </SelectField>
          <SelectField>
            Value Source
            <Select><option>From Variable</option></Select>
            <ChevronDown size={13} />
          </SelectField>
          <FieldButton>
            <MdTextFields size={20} />
            <Accent>UNSET</Accent>
            <PencilLine size={18} strokeWidth={1.6} />
          </FieldButton>
        </FieldsBody>
      </FieldsCard>
      <AddField><Svg size={14} width={2}><path d="M12 3v18M3 12h18" /></Svg>Add Field</AddField>
      <ToggleRow>
        Non-Blocking <MdInfoOutline size={14} />
        <Toggle type="checkbox" />
      </ToggleRow>
    </Props>
  );
}

function App() {
  return (
    <Shell>
      <GlobalStyle />
      <Header />
      <Main>
        <Rail>
          <RailLabel>Build</RailLabel>
          {buildItems.map(item => (
            <RailSlot key={item.label}>
              <RailButton aria-label={item.label} $active={item.active}>{item.icon}</RailButton>
            </RailSlot>
          ))}
          <RailRule />
          <RailLabel>Connect</RailLabel>
          {connectItems.map(item => (
            <RailSlot key={item.label}>
              <RailButton aria-label={item.label}>
                {item.icon}
                {item.star && <RailStar><MdStar size={12} /></RailStar>}
              </RailButton>
            </RailSlot>
          ))}
        </Rail>

        <LeftPanel>
          <PageTools>
            <Segments>
              <Segment aria-label="All" $active><PageGem size={18} /></Segment>
              <Segment aria-label="Pages"><Pages size={18} /></Segment>
              <Segment aria-label="Components"><Gem size={18} strokeWidth={1.6} /></Segment>
            </Segments>
            <ToolSquare aria-label="Add folder"><FolderPlus size={18} /></ToolSquare>
            <ToolSquare aria-label="Add page" $accent><PagesPlus size={18} /></ToolSquare>
          </PageTools>
          <SearchRow>
            <SearchInput placeholder="Search for pages or components..." />
            <MdSearch size={20} />
          </SearchRow>
          <PageList>
            {pageRows.map(row => (
              <PageRow key={row.name} $kind={row.count ? 'folder' : 'page'} $active={row.active}>
                {row.count ? <FolderOpen /> : <Pages size={16} width={1.8} />}
                {row.count ? <FolderName>{row.name}</FolderName> : row.name}
                {row.count && <Count>{row.count}</Count>}
              </PageRow>
            ))}
          </PageList>
          <SplitBar />
          <TreeHeader>
            <TreeIcon size={18} />
            <TreeTitle>Widget Tree</TreeTitle>
            <MdInfoOutline size={16} />
            <TreeTools>
              <Lock size={17} />
              <Expand size={17} />
              <Collapse size={19} />
            </TreeTools>
          </TreeHeader>
          <SearchRow>
            <SearchInput placeholder="Search for widget..." />
            <MdSearch size={20} />
          </SearchRow>
          <TreeView>
            <TreeRows>
              {upperNodes.map(renderNode)}
              <SubTree>{lowerNodes.map(renderNode)}</SubTree>
            </TreeRows>
          </TreeView>
          <ResizeGrip />
        </LeftPanel>

        <Canvas>
          <CanvasTools>
            <CanvasTool>
              <CanvasButton aria-label="Collapse panel">
                <Svg size={18} width={2.4}>
                  <path d="M5 2v20" strokeWidth="4" strokeLinecap="butt" />
                  <path d="M17 6l-5 5 5 5" />
                </Svg>
              </CanvasButton>
            </CanvasTool>
            <CanvasTool>
              <ZoomButton aria-label="Zoom out"><Svg size={14} width={3}><path d="M2 12h20" /></Svg></ZoomButton>
              <ZoomValue>90%</ZoomValue>
              <ZoomButton aria-label="Zoom in"><Svg size={14} width={3}><path d="M2 12h20M12 2v20" /></Svg></ZoomButton>
            </CanvasTool>
            <AiButton aria-label="AI generate">
              <Svg size={19} width={1.9}>
                <path d="M5 2h17l-2 6M5 2L2 6l3 3h8M5 5l6 4 4-7M3 12h7M3 12l4 5-5 3 3 3 4-5 2-6M12 22l10-10M14 12l8 10" />
              </Svg>
            </AiButton>
            <CanvasTool $push>
              <CanvasButton aria-label="Phone" $wide><PhoneOutline /></CanvasButton>
              <CanvasButton aria-label="Split" $wide><PhoneSplit /></CanvasButton>
              <CanvasButton aria-label="Text scale" $wide><MdFormatSize size={19} /></CanvasButton>
            </CanvasTool>
            <CanvasTool>
              <CanvasButton aria-label="Canvas settings"><FrameGear /></CanvasButton>
            </CanvasTool>
          </CanvasTools>
          <Stage>
            <PhonePreview />
            <SideButtons>
              <SideButton aria-label="App bar">
                <Svg size={16} width={2.4}><rect x="1" y="8" width="22" height="8" rx="1" /><path d="M6 12h1M11 12h2M17 12h1" /></Svg>
              </SideButton>
              <SideButton aria-label="Nav bar">
                <Svg size={17} width={2}><rect x="1" y="3" width="22" height="17" rx="1" /><path d="M5 17h14" strokeWidth="3" /></Svg>
              </SideButton>
            </SideButtons>
          </Stage>
          <VariablePopup />
        </Canvas>

        <Properties />
      </Main>
      <HelpFab aria-label="Help search">
        <Svg size={30} width={2}>
          <circle cx="10" cy="10" r="8.5" />
          <path d="M16.500 16.500l5.500 5.500" strokeWidth="4" />
          <path d="M6.500 11.500c2 2 5 2 7 0" strokeWidth="1.5" />
        </Svg>
      </HelpFab>
      <Watermark>
        <strong>Windows 정품 인증</strong>
        [설정]으로 이동하여 Windows를 정품 인증합니다.
      </Watermark>
    </Shell>
  );
}

export default App;
